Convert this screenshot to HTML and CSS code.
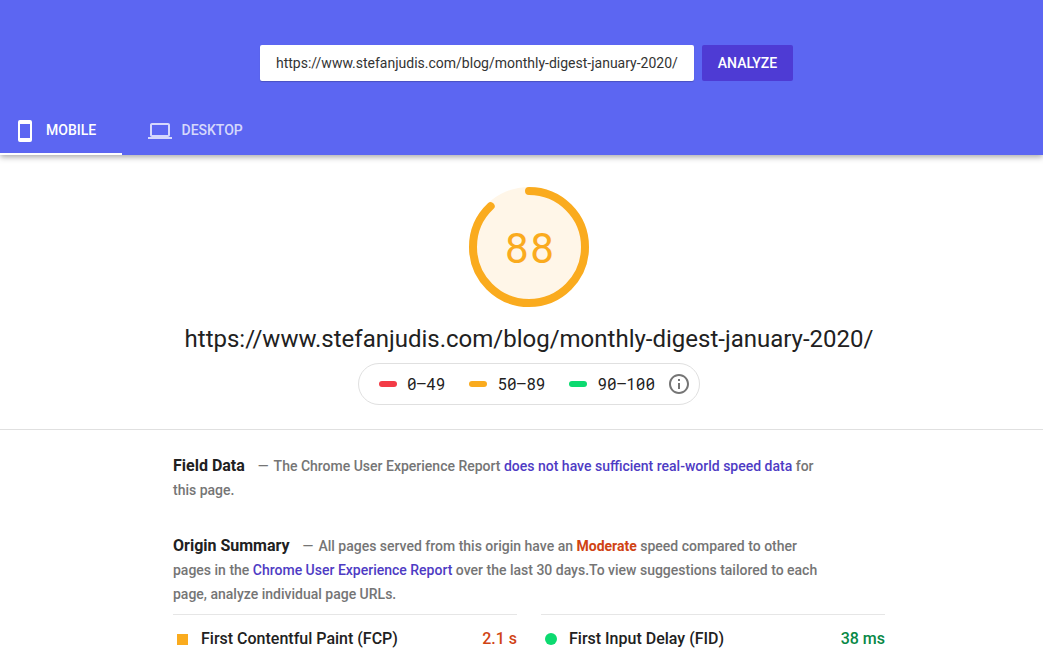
FILE: index.html
```html
<!DOCTYPE html>
<html lang="en">

<head>
    <meta charset="UTF-8">
    <meta name="viewport" content="width=device-width, initial-scale=1.0">
    <title>PageSpeed Insights</title>
    <link rel="stylesheet" href="styles.css">
</head>

<body>
    <header>
        <form class="search">
            <input type="text" class="url" aria-label="Web page URL" value="https://www.stefanjudis.com/blog/monthly-digest-january-2020/">
            <button type="button" class="analyze">ANALYZE</button>
        </form>
        <nav class="tabs">
            <a class="tab mobile active">
                <svg width="24" height="24" viewBox="0 0 24 24" fill="currentColor">
                    <path fill-rule="evenodd" d="M7 1h10a2 2 0 0 1 2 2v18a2 2 0 0 1-2 2H7a2 2 0 0 1-2-2V3a2 2 0 0 1 2-2zm0 4v14h10V5z"/>
                </svg>
                <span>MOBILE</span>
            </a>
            <a class="tab desktop">
                <svg width="24" height="24" viewBox="0 0 24 24" fill="currentColor">
                    <path d="M20 18c1.1 0 2-.9 2-2V6c0-1.100-.9-2-2-2H4c-1.100 0-2 .9-2 2v10c0 1.100.9 2 2 2H0v2h24v-2h-4zM4 6h16v10H4V6z"/>
                </svg>
                <span>DESKTOP</span>
            </a>
        </nav>
    </header>

    <main>
        <section class="overview">
            <div class="gauge">
                <svg width="120" height="120" viewBox="0 0 120 120">
                    <circle class="gauge-base" cx="60" cy="60" r="60"/>
                    <circle class="gauge-arc" cx="60" cy="60" r="56" pathLength="100" stroke-dasharray="88 100" transform="rotate(-90 60 60)"/>
                </svg>
                <div class="score">88</div>
            </div>
            <h1>https://www.stefanjudis.com/blog/monthly-digest-january-2020/</h1>
            <div class="scale">
                <span class="range red">0–49</span>
                <span class="range orange">50–89</span>
                <span class="range green">90–100</span>
                <svg class="info" width="24" height="24" viewBox="0 0 24 24" fill="currentColor">
                    <path d="M11 17h2v-6h-2v6zm1-15C6.480 2 2 6.480 2 12s4.480 10 10 10 10-4.480 10-10S17.520 2 12 2zm0 18c-4.410 0-8-3.590-8-8s3.590-8 8-8 8 3.590 8 8-3.590 8-8 8zM11 9h2V7h-2v2z"/>
                </svg>
            </div>
        </section>

        <section class="report">
            <p class="summary"><b>Field Data</b><span class="dash">—</span>The Chrome User Experience Report <a>does not have sufficient real-world speed data</a> for<br>this page.</p>
            <p class="summary"><b>Origin Summary</b><span class="dash">—</span>All pages served from this origin have an <strong>Moderate</strong> speed compared to other<br>pages in the <a>Chrome User Experience Report</a> over the last 30 days.To view suggestions tailored to each<br>page, analyze individual page URLs.</p>
            <div class="metrics">
                <div class="metric average">
                    <i></i><span class="name">First Contentful Paint (FCP)</span><span class="value">2.1 s</span>
                </div>
                <div class="metric fast">
                    <i></i><span class="name">First Input Delay (FID)</span><span class="value">38 ms</span>
                </div>
            </div>
        </section>
    </main>
</body>

</html>
```
FILE: styles.css
```css
* {
    box-sizing: border-box;
    margin: 0;
    padding: 0;
}

body {
    height: 653px;
    font-family: Roboto, sans-serif;
    color: #212121;
    background: #fff;
    overflow: hidden;
}

header {
    height: 155px;
    padding-top: 45px;
    background: #5c66f2;
    box-shadow: 0 2px 6px rgba(0, 0, 0, 0.35);
}

.search {
    display: flex;
    gap: 8px;
    padding-left: 260px;
}

.url {
    width: 434px;
    height: 36px;
    padding: 0 16px;
    border: 0;
    border-radius: 2px;
    font: 14px Roboto, sans-serif;
    color: #333;
    box-shadow: 0 1px 1px rgba(0, 0, 0, 0.2);
}

.analyze {
    width: 91px;
    height: 36px;
    border: 0;
    border-radius: 2px;
    background: #4e3bd4;
    color: #fff;
    font: 500 14px Roboto, sans-serif;
}

.tabs {
    display: flex;
    height: 48px;
    margin-top: 26px;
    font-size: 14px;
    font-weight: 500;
}

.tab {
    display: flex;
    align-items: center;
    color: rgba(255, 255, 255, 0.75);
}

.mobile {
    width: 122px;
    padding-left: 13px;
    gap: 9px;
}

.mobile svg {
    margin-top: 2px;
}

.desktop {
    padding-left: 26px;
    gap: 9.5px;
}

.desktop span {
    margin-bottom: 2px;
}

.active {
    color: #fff;
    border-bottom: 2px solid #fff;
}

main {
    width: 1058px;
}

.overview {
    display: flex;
    flex-direction: column;
    align-items: center;
    height: 275px;
    padding-top: 32px;
    border-bottom: 1px solid #e0e0e0;
}

.gauge {
    display: grid;
    place-items: center;
}

.gauge > * {
    grid-area: 1 / 1;
}

.gauge-base {
    fill: #fff6e8;
}

.gauge-arc {
    fill: none;
    stroke: #faab1e;
    stroke-width: 8;
    stroke-linecap: round;
}

.score {
    font: 42px/56px "Roboto Mono", Roboto, sans-serif;
    color: #faab1e;
}

h1 {
    margin-top: 16px;
    font-size: 24px;
    font-weight: 400;
    line-height: 32px;
}

.scale {
    display: flex;
    align-items: center;
    width: 342px;
    height: 42px;
    margin-top: 8px;
    padding-left: 20px;
    border: 1px solid #e0e0e0;
    border-radius: 21px;
    font: 16px/20px "Roboto Mono", Roboto, sans-serif;
}

.range {
    display: flex;
    align-items: center;
    gap: 10px;
    margin-right: 24px;
}

.range::before {
    content: "";
    width: 18px;
    height: 6px;
    border-radius: 3px;
    background: #f33b46;
}

.orange::before {
    background: #faab1e;
}

.green::before {
    background: #0cda70;
}

.green {
    margin-right: 12px;
}

.info {
    color: #757575;
}

.report {
    width: 712px;
    margin: 24px auto 0;
}

.summary {
    margin-bottom: 32px;
    font-size: 14px;
    font-weight: 500;
    line-height: 24px;
    color: #757575;
    white-space: nowrap;
}

.summary + .summary {
    margin-bottom: 8px;
}

.summary b {
    font-size: 16px;
    font-weight: 700;
    line-height: 20px;
    color: #212121;
}

.dash {
    margin: 0 5px 0 13px;
}

.summary a {
    color: #4e3bc4;
}

.summary strong {
    font-weight: 700;
    color: #d04313;
}

.metrics {
    display: grid;
    grid-template-columns: 1fr 1fr;
    gap: 24px;
}

.metric {
    display: flex;
    align-items: center;
    height: 49px;
    border-top: 1px solid #e6e6e6;
    font-size: 16px;
    font-weight: 500;
}

.metric span {
    padding-bottom: 2px;
}

.metric i {
    width: 11px;
    height: 11px;
    margin: 0 13px 0 4px;
    background: #faab1e;
}

.fast i {
    width: 12px;
    height: 12px;
    margin-right: 12px;
    border-radius: 50%;
    background: #0cda70;
}

.value {
    margin-left: auto;
    color: #d04313;
}

.fast .value {
    color: #078846;
}
```
